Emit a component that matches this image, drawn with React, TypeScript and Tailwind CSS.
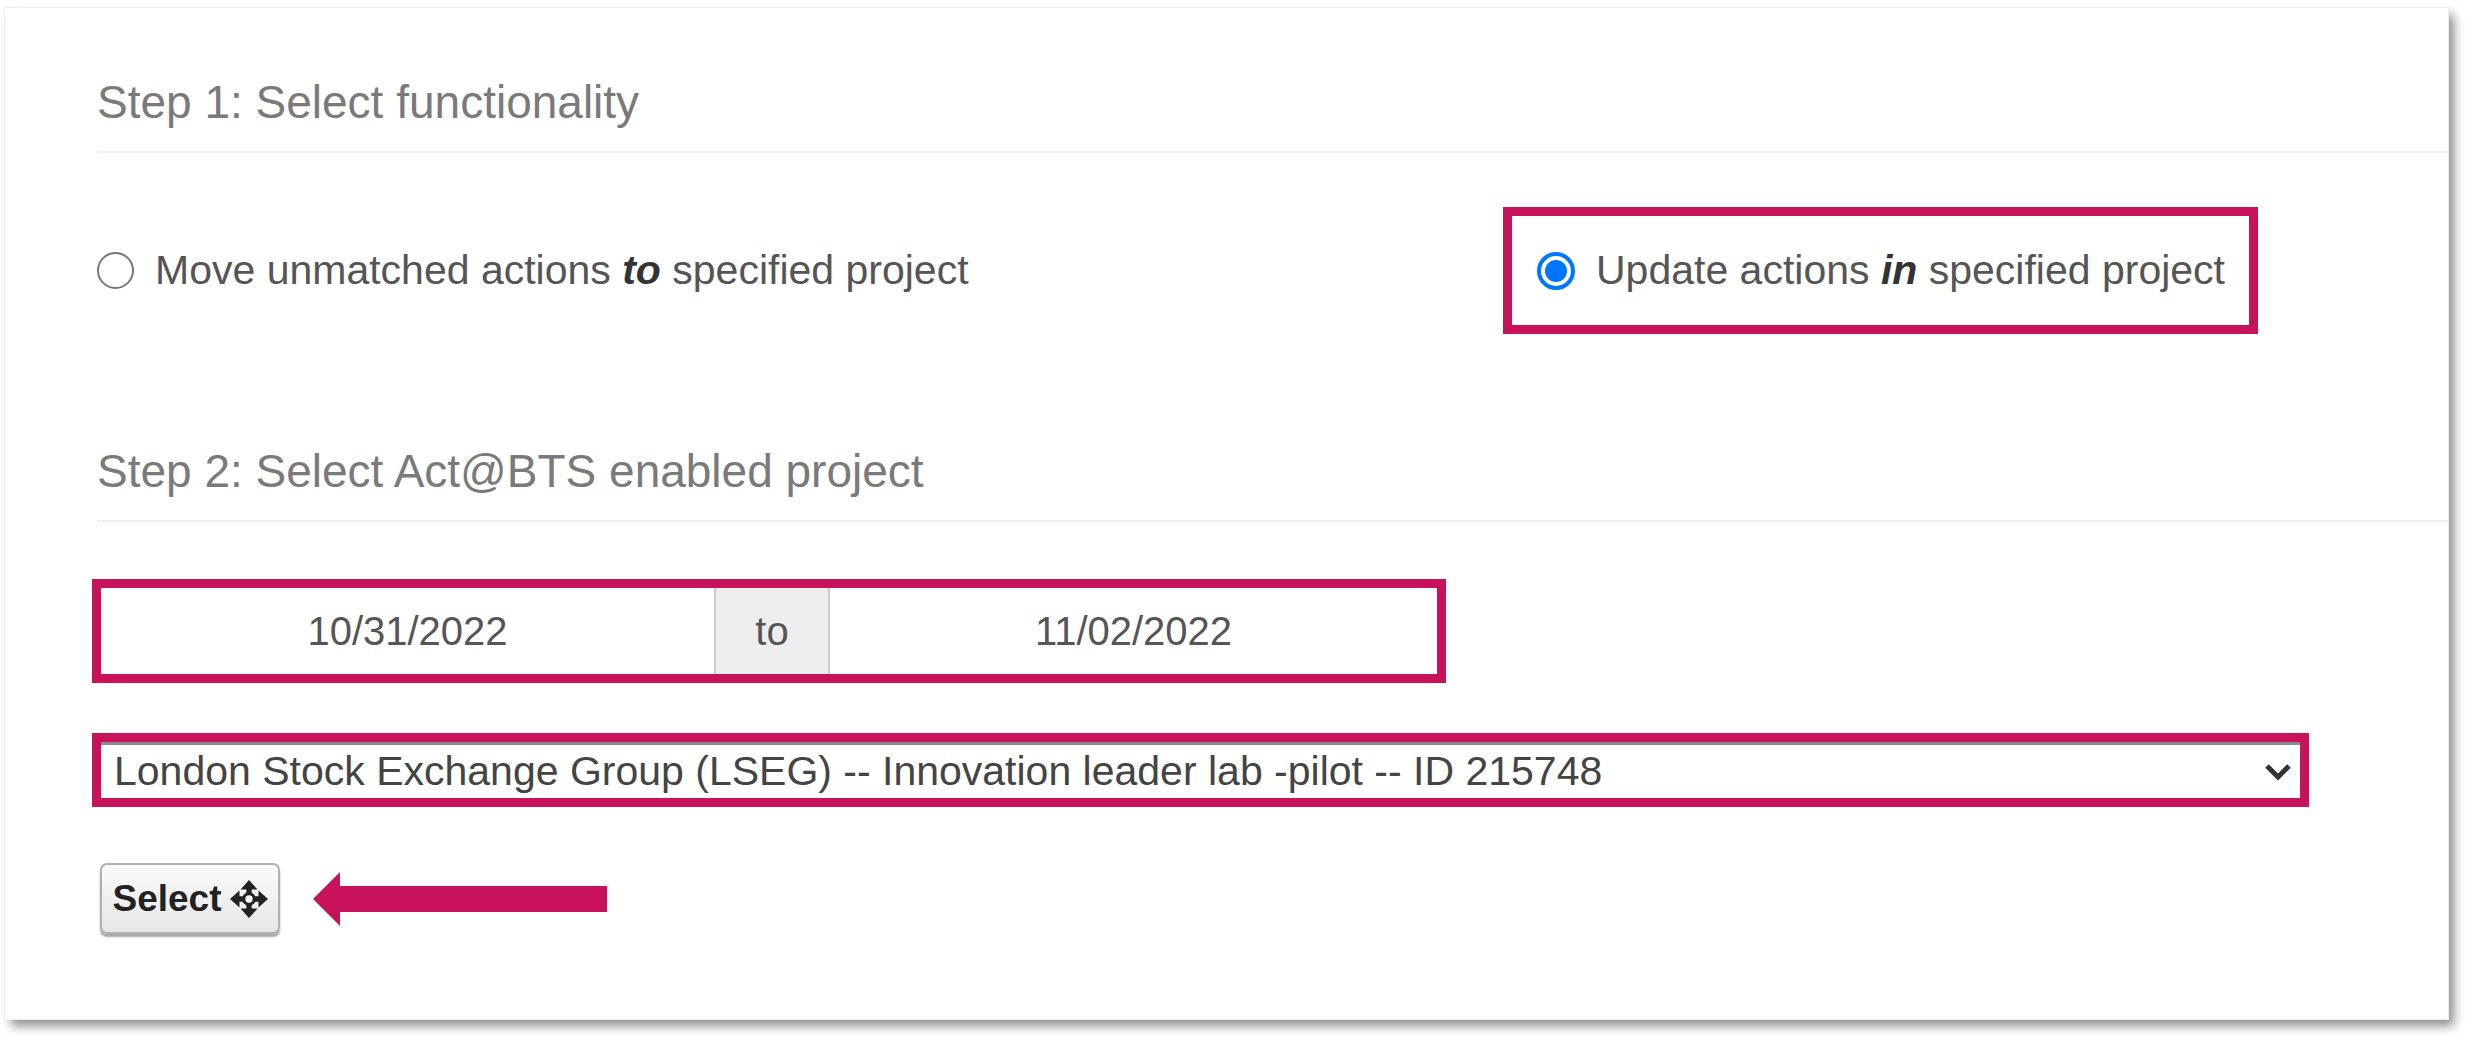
import React, { useState } from 'react';

const MoveIcon = () => (
    <svg width="38" height="38" viewBox="0 0 36 36" className="ml-[8px]">
        <path d="M18 5 V31 M5 18 H31" stroke="#222" strokeWidth="5" />
        <polygon points="18,0 10,9 26,9" fill="#222" />
        <polygon points="18,36 10,27 26,27" fill="#222" />
        <polygon points="0,18 9,10 9,26" fill="#222" />
        <polygon points="36,18 27,10 27,26" fill="#222" />
        <circle cx="18" cy="18" r="5" fill="#fff" stroke="#222" strokeWidth="3" />
    </svg>
);

function Radio({ checked }: { checked: boolean }) {
    if (checked) {
        return (
            <span className="w-[38px] h-[38px] shrink-0 rounded-full border-[4px] border-[#0075ff] bg-white p-[4px] flex">
                <span className="flex-1 rounded-full bg-[#0075ff]" />
            </span>
        );
    }
    return <span className="w-[37px] h-[37px] shrink-0 rounded-full border-2 border-[#767676] bg-white" />;
}

export default function App() {
    const [mode, setMode] = useState<'move' | 'update'>('update');

    return (
        <div className="min-h-screen bg-white pl-[5px] pt-[8px] font-['Liberation_Sans',Arial,sans-serif]">
            <div className="w-[2443px] h-[1011px] bg-white pl-[87px] pt-[68px] shadow-[0_0_0_1px_#ededed,6px_7px_10px_rgba(0,0,0,0.45)]">
                <h2 className="ml-[5px] text-[46px] leading-[53px] text-[#7a7a7a] pb-[22px] border-b-2 border-[#eee]">
                    Step 1: Select functionality
                </h2>

                <div className="mt-[54px] flex items-center">
                    <label className="ml-[5px] w-[1406px] flex items-center gap-[21px] cursor-pointer" onClick={() => setMode('move')}>
                        <Radio checked={mode === 'move'} />
                        <span className="text-[41px] leading-[47px] text-[#555]">
                            Move unmatched actions <b className="italic text-[#333]">to</b> specified project
                        </span>
                    </label>
                    <div className="h-[127px] border-[9px] border-[#c8135b] flex items-center pl-[25px] pr-[24px]">
                        <label className="flex items-center gap-[21px] cursor-pointer" onClick={() => setMode('update')}>
                            <Radio checked={mode === 'update'} />
                            <span className="text-[41px] leading-[47px] text-[#555]">
                                Update actions <b className="italic text-[#333]">in</b> specified project
                            </span>
                        </label>
                    </div>
                </div>

                <h2 className="mt-[111px] ml-[5px] text-[46px] leading-[53px] text-[#7a7a7a] pb-[22px] border-b-2 border-[#eee]">
                    Step 2: Select Act@BTS enabled project
                </h2>

                <div className="mt-[57px] w-[1354px] h-[104px] border-[9px] border-[#c8135b] flex bg-white">
                    <div className="w-[613px] flex items-center justify-center text-[40px] text-[#555]">10/31/2022</div>
                    <div className="w-[116px] flex items-center justify-center bg-[#eee] border-x-2 border-[#ccc] text-[40px] text-[#555]">to</div>
                    <div className="flex-1 flex items-center justify-center text-[40px] text-[#555]">11/02/2022</div>
                </div>

                <div className="mt-[50px] w-[2217px] h-[74px] border-[9px] border-[#c8135b]">
                    <div className="h-full flex items-center justify-between border-t-[3px] border-[#8a8a8a] bg-white pl-[13px] pr-[8px]">
                        <span className="text-[41px] leading-[47px] text-[#444]">
                            London Stock Exchange Group (LSEG) -- Innovation leader lab -pilot -- ID 215748
                        </span>
                        <svg width="28" height="18" viewBox="0 0 28 18">
                            <path d="M3 3 L14 14 L25 3" fill="none" stroke="#333" strokeWidth="5" />
                        </svg>
                    </div>
                </div>

                <div className="mt-[56px] ml-[8px] flex items-center">
                    <button className="w-[180px] h-[71px] rounded-[7px] border-2 border-[#b0b0b0] bg-gradient-to-b from-[#fbfbfb] to-[#e6e6e6] shadow-[0_3px_2px_rgba(0,0,0,0.35)] flex items-center justify-center text-[37px] font-bold text-[#222]">
                        Select
                        <MoveIcon />
                    </button>
                    <svg width="294" height="54" viewBox="0 0 294 54" className="ml-[33px]">
                        <polygon points="0,27 27,0 27,14 294,14 294,40 27,40 27,54" fill="#c8135b" />
                    </svg>
                </div>
            </div>
        </div>
    );
}
